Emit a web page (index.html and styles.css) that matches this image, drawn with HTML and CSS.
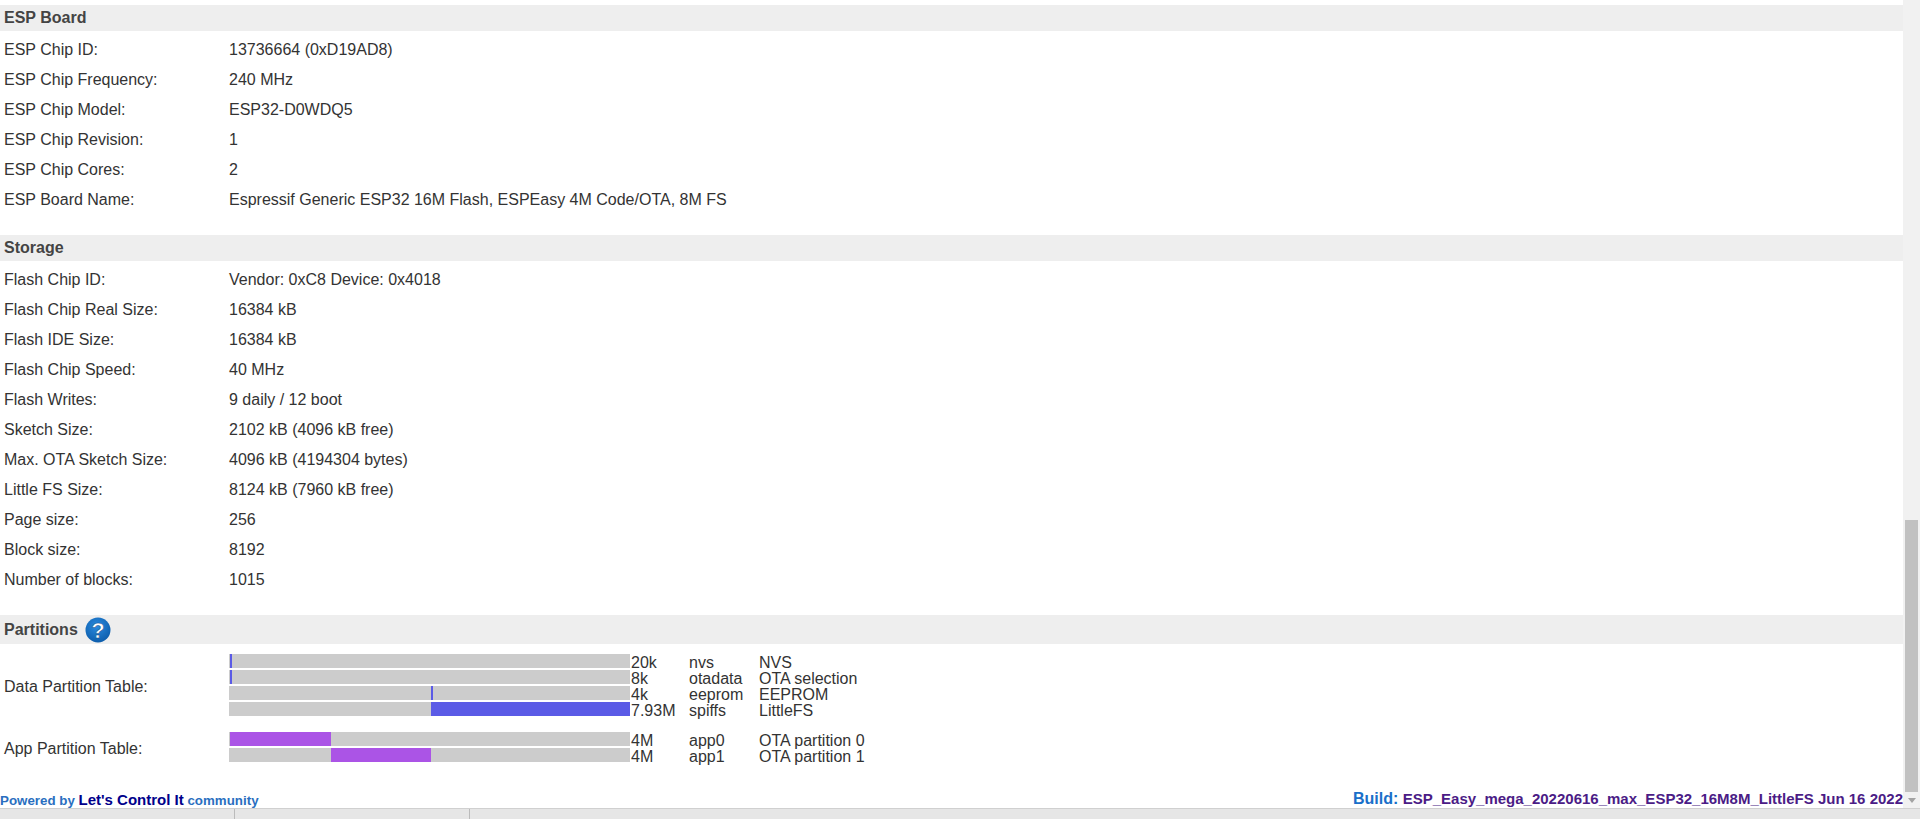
FILE: index.html
```html
<!DOCTYPE html>
<html lang="en">
<head>
  <meta charset="UTF-8">
  <title>ESP Easy Mega: Sysinfo</title>
  <link rel="stylesheet" href="styles.css">
</head>
<body>
  <div class="window">
    <div class="page">
      <div class="content">
        <h3 class="section">ESP Board</h3>
        <table class="info">
          <tr><td>ESP Chip ID:</td><td>13736664 (0xD19AD8)</td></tr>
          <tr><td>ESP Chip Frequency:</td><td>240 MHz</td></tr>
          <tr><td>ESP Chip Model:</td><td>ESP32-D0WDQ5</td></tr>
          <tr><td>ESP Chip Revision:</td><td>1</td></tr>
          <tr><td>ESP Chip Cores:</td><td>2</td></tr>
          <tr><td>ESP Board Name:</td><td>Espressif Generic ESP32 16M Flash, ESPEasy 4M Code/OTA, 8M FS</td></tr>
        </table>

        <h3 class="section">Storage</h3>
        <table class="info">
          <tr><td>Flash Chip ID:</td><td>Vendor: 0xC8 Device: 0x4018</td></tr>
          <tr><td>Flash Chip Real Size:</td><td>16384 kB</td></tr>
          <tr><td>Flash IDE Size:</td><td>16384 kB</td></tr>
          <tr><td>Flash Chip Speed:</td><td>40 MHz</td></tr>
          <tr><td>Flash Writes:</td><td>9 daily / 12 boot</td></tr>
          <tr><td>Sketch Size:</td><td>2102 kB (4096 kB free)</td></tr>
          <tr><td>Max. OTA Sketch Size:</td><td>4096 kB (4194304 bytes)</td></tr>
          <tr><td>Little FS Size:</td><td>8124 kB (7960 kB free)</td></tr>
          <tr><td>Page size:</td><td>256</td></tr>
          <tr><td>Block size:</td><td>8192</td></tr>
          <tr><td>Number of blocks:</td><td>1015</td></tr>
        </table>

        <h3 class="section section_help">Partitions
          <svg class="help" width="26" height="26" viewBox="0 0 26 26">
            <defs>
              <radialGradient id="help_fill" cx="45%" cy="35%" r="70%">
                <stop offset="0" stop-color="#2a8be0"/>
                <stop offset="1" stop-color="#0b5aa8"/>
              </radialGradient>
            </defs>
            <circle cx="13" cy="13" r="12.5" fill="url(#help_fill)"/>
            <text x="13" y="21" text-anchor="middle" class="help_mark">?</text>
          </svg>
        </h3>

        <div class="partitions">
          <div class="partition_label">Data Partition Table:</div>
          <div class="partition_rows">
            <div class="partition_row">
              <div class="bar"><div class="seg seg_data" style="left:1px;width:2px"></div></div>
              <span>20k</span><span>nvs</span><span>NVS</span>
            </div>
            <div class="partition_row">
              <div class="bar"><div class="seg seg_data" style="left:1px;width:2px"></div></div>
              <span>8k</span><span>otadata</span><span>OTA selection</span>
            </div>
            <div class="partition_row">
              <div class="bar"><div class="seg seg_data" style="left:202px;width:2px"></div></div>
              <span>4k</span><span>eeprom</span><span>EEPROM</span>
            </div>
            <div class="partition_row">
              <div class="bar"><div class="seg seg_data" style="left:202px;width:199px"></div></div>
              <span>7.93M</span><span>spiffs</span><span>LittleFS</span>
            </div>
          </div>
        </div>
        <div class="partitions partitions_app">
          <div class="partition_label">App Partition Table:</div>
          <div class="partition_rows">
            <div class="partition_row">
              <div class="bar"><div class="seg seg_app" style="left:1px;width:101px"></div></div>
              <span>4M</span><span>app0</span><span>OTA partition 0</span>
            </div>
            <div class="partition_row">
              <div class="bar"><div class="seg seg_app" style="left:102px;width:100px"></div></div>
              <span>4M</span><span>app1</span><span>OTA partition 1</span>
            </div>
          </div>
        </div>

        <div class="footer">
          <div class="powered">Powered by <a href="#">Let's Control It</a> community</div>
          <div class="build">Build: <span>ESP_Easy_mega_20220616_max_ESP32_16M8M_LittleFS Jun 16 2022</span></div>
        </div>
      </div>
      <div class="scrollbar">
        <div class="thumb"></div>
        <div class="arrow_down"></div>
      </div>
    </div>
    <div class="taskbar">
      <div class="task"></div>
      <div class="task"></div>
    </div>
  </div>
</body>
</html>
```

FILE: styles.css
```css
*{
  margin: 0;
  padding: 0;
  box-sizing: border-box;
}
html, body{
  height: 100%;
  overflow: hidden;
}
body{
  font-family: "Liberation Sans", Arial, sans-serif;
  font-size: 16px;
  color: #333;
  background-color: white;
}
.window{
  height: 819px;
  display: flex;
  flex-direction: column;
}
.page{
  flex: 1;
  min-height: 0;
  display: flex;
}
.content{
  flex: 1;
  min-width: 0;
  padding-top: 5px;
  display: flex;
  flex-direction: column;
}

/* section headers */
.section{
  height: 26px;
  line-height: 25px;
  padding-left: 4px;
  font-size: 16px;
  font-weight: bold;
  color: #444;
  background-color: #eee;
}
.section_help{
  height: 29px;
  line-height: 29px;
  display: flex;
  align-items: center;
  gap: 7px;
}
.help_mark{
  font-family: "Liberation Sans", Arial, sans-serif;
  font-size: 22px;
  font-weight: bold;
  fill: white;
  stroke: #0a4a8c;
  stroke-width: 0.5px;
}

/* key / value rows */
.info{
  border-collapse: collapse;
  margin-top: 4px;
  margin-bottom: 20px;
}
.info td{
  height: 30px;
  padding: 0 0 0 4px;
}
.info td:first-child{
  width: 225px;
}

/* partition bars */
.partitions{
  display: flex;
  align-items: center;
  padding-top: 10px;
}
.partitions_app{
  padding-top: 16px;
}
.partition_label{
  width: 229px;
  padding-left: 4px;
  padding-top: 3px;
}
.partition_rows{
  display: flex;
  flex-direction: column;
  gap: 2px;
}
.partition_row{
  display: grid;
  grid-template-columns: 402px 58px 70px auto;
  height: 14px;
  line-height: 18px;
  font-size: 16px;
  color: #333;
}
.bar{
  width: 401px;
  height: 14px;
  background-color: #ccc;
  position: relative;
}
.seg{
  position: absolute;
  top: 0;
  height: 14px;
}
.seg_data{
  background-color: #5b5be6;
}
.seg_app{
  background-color: #ab54e6;
}

/* footer */
.footer{
  margin-top: auto;
  display: flex;
  justify-content: space-between;
  align-items: flex-end;
  height: 20px;
}
.powered{
  font-size: 13.33px;
  font-weight: bold;
  color: #2a6fc0;
}
.powered a{
  font-size: 15px;
  color: #00008b;
  text-decoration: none;
}
.build{
  font-size: 16px;
  font-weight: bold;
  color: #1a6fc9;
}
.build span{
  font-size: 15px;
  color: #4b1c86;
}

/* scrollbar and bottom strip */
.scrollbar{
  width: 17px;
  background-color: #f1f1f1;
  display: flex;
  flex-direction: column;
  justify-content: flex-end;
  align-items: center;
}
.thumb{
  width: 13px;
  height: 272px;
  background-color: #c1c1c1;
  margin-bottom: 2px;
}
.arrow_down{
  width: 0;
  height: 0;
  margin: 4px 0 5px;
  border-left: 4px solid transparent;
  border-right: 4px solid transparent;
  border-top: 5px solid #a3a3a3;
}
.taskbar{
  height: 11px;
  background-color: #e6e6e6;
  border-top: 1px solid #d0d0d0;
  display: flex;
}
.task{
  width: 235px;
  border-right: 1px solid #bbb;
}
```
